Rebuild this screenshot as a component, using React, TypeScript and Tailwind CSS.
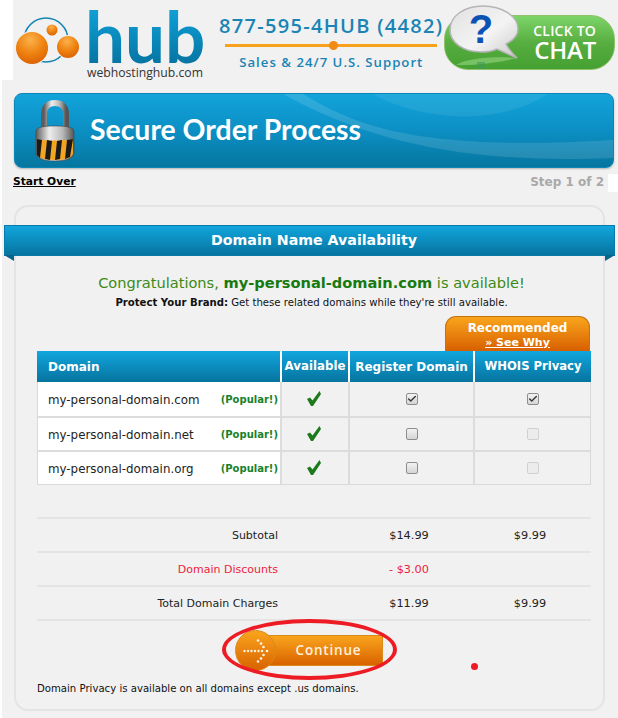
import { Check } from "lucide-react";

const sans = "font-['DejaVu_Sans',Verdana,sans-serif]";
const brand = "font-['Open_Sans',sans-serif]";

const domains = [
  { name: "my-personal-domain.com", picked: true },
  { name: "my-personal-domain.net", picked: false },
  { name: "my-personal-domain.org", picked: false },
];

function Logo() {
  return (
    <div className="flex h-[80px] w-[205px]">
      <span className="h-full w-[11px] shrink-0 bg-white" />
      <svg width="72" height="80" viewBox="13 0 72 80" className="shrink-0">
        <defs>
          <radialGradient id="ball" cx="45%" cy="25%" r="80%">
            <stop offset="0%" stopColor="#fbb24a" />
            <stop offset="55%" stopColor="#ee8110" />
            <stop offset="100%" stopColor="#d95f02" />
          </radialGradient>
        </defs>
        <circle cx="46" cy="40" r="22" fill="none" stroke="#1684b4" strokeWidth="1.6" />
        <circle cx="32" cy="48" r="17" fill="#f1f1f1" />
        <circle cx="68" cy="47" r="12" fill="#f1f1f1" />
        <circle cx="32" cy="48" r="16" fill="url(#ball)" />
        <circle cx="52" cy="30" r="5.5" fill="url(#ball)" />
        <circle cx="68" cy="47" r="11" fill="url(#ball)" />
      </svg>
      <div className="flex flex-col">
        <span className="h-[65px] bg-gradient-to-b from-[#10a8e0] to-[#0674a2] bg-clip-text font-['Lato',sans-serif] text-[71px] font-bold leading-[71px] text-transparent">
          hub
        </span>
        <span className={`${brand} ml-[2px] whitespace-nowrap text-[12.2px] leading-[16px] text-[#333]`}>webhostinghub.com</span>
      </div>
    </div>
  );
}

function ChatButton() {
  return (
    <div className="relative ml-auto mt-[15px] flex h-[55px] w-[171px] flex-col items-end rounded-[24px] border border-[#8fc26a] bg-gradient-to-b from-[#7dd468] via-[#58ae40] to-[#45a032] pr-[18px] pt-[6px] text-white">
      <span className={`${brand} text-[14px] font-semibold leading-[17px] tracking-[0.2px]`}>CLICK TO</span>
      <span className={`${brand} mt-[-1px] text-[24px] font-semibold leading-[24px] tracking-[-0.2px]`}>CHAT</span>
      {/* bubble + its faint reflection on the button */}
      <svg width="72" height="66" viewBox="0 0 72 66" className="absolute left-[3px] top-[-11px]">
        <defs>
          <linearGradient id="bubble" x1="0" y1="0" x2="1" y2="1">
            <stop offset="0%" stopColor="#e0e0e0" />
            <stop offset="55%" stopColor="#f4f4f4" />
            <stop offset="100%" stopColor="#cbcbcb" />
          </linearGradient>
        </defs>
        <path d="M8 60c10-7 40-9 60-7-8 3-42 8-60 7Z" fill="#8bcf78" opacity="0.7" />
        <rect x="29" y="57" width="8" height="7" fill="#3f9a5a" opacity="0.6" />
        <path
          d="M35 1C16 1 2 11 2 25c0 13 14 22 31 22 6 0 12-1 16-3l20 9c-4-4-9-10-11-14 8-4 12-9 12-15C70 11 54 1 35 1Z"
          fill="url(#bubble)"
          stroke="#b5b5b5"
          strokeWidth="1.5"
        />
        <text x="33" y="38" textAnchor="middle" fontFamily="'Liberation Sans',sans-serif" fontWeight="700" fontSize="40" fill="#0b52b4">
          ?
        </text>
      </svg>
    </div>
  );
}

function Padlock() {
  return (
    <svg width="42" height="62" viewBox="0 0 42 62" className="shrink-0">
      <defs>
        <linearGradient id="steel" x1="0" y1="0" x2="1" y2="0">
          <stop offset="0%" stopColor="#5d5d5d" />
          <stop offset="35%" stopColor="#eeeeee" />
          <stop offset="70%" stopColor="#b9b9b9" />
          <stop offset="100%" stopColor="#555" />
        </linearGradient>
      </defs>
      <path d="M10 30V14C10 6 15 3 21 3s11 3 11 11v16" fill="none" stroke="url(#steel)" strokeWidth="6" />
      <path d="M2 31c0-3 5-5 19-5s19 2 19 5v22c0 5-6 8-19 8S2 58 2 53Z" fill="url(#steel)" stroke="#444" strokeWidth="0.6" />
      <path d="M3 39c5 2 31 2 36 0v15c-1 3-7 6-18 6S4 57 3 54Z" fill="#f3a51f" />
      <path d="M3 39l5 1-2 18-3-3ZM13 40l5 1-2 19-5-1ZM23 41l5-1-2 19-5 1ZM33 40l6-1-3 18-5 2Z" fill="#1a1a1a" />
    </svg>
  );
}

function Banner() {
  return (
    <div className="relative ml-[12px] flex h-[75px] w-[600px] items-center overflow-hidden rounded-[8px] border border-[#0c86b6] bg-gradient-to-b from-[#12a4da] via-[#0c8fc4] to-[#06769f] pl-[19px] shadow-[0_1px_2px_rgba(0,0,0,0.25)]">
      <Padlock />
      <h1 className="mb-[2px] ml-[14px] font-['Lato',sans-serif] text-[28.4px] font-bold leading-none text-white">Secure Order Process</h1>
      <svg width="330" height="75" viewBox="0 0 330 75" className="absolute right-0 top-0">
        <path d="M20 0c50 30 110 58 310 46V64C190 70 90 50 0 0Z" fill="#fff" opacity="0.12" />
        <path d="M90 0c30 18 110 40 175 0Z" fill="#fff" opacity="0.07" />
      </svg>
    </div>
  );
}

function Box({ checked, disabled }: { checked?: boolean; disabled?: boolean }) {
  return (
    <span
      className={`relative inline-flex h-[12px] w-[12px] items-center justify-center rounded-[2px] border ${
        disabled
          ? "border-[#d0d0d0] bg-[#ececec]"
          : "border-[#8e8e8e] bg-gradient-to-b from-[#f2f2f2] to-[#d5d5d5]"
      }`}
    >
      {checked && <Check size={10} strokeWidth={3.5} className="text-[#3a3a3a]" />}
    </span>
  );
}

function Tick() {
  return (
    <svg width="14" height="15" viewBox="0 0 14 15" className="ml-[-2px] mt-[-1px]">
      <path d="M0 8 3 6.5 5.5 9.5 12.5 0 14 3 6 15H4Z" fill="#1c7a1c" />
    </svg>
  );
}

function TotalRow({ label, first, second, red }: { label: string; first: string; second: string; red?: boolean }) {
  return (
    <div
      className={`grid h-[34px] grid-cols-[241px_68px_125px_118px] items-center border-t-2 border-[#e4e4e4] pt-[2px] text-[11.3px] ${
        red ? "text-[#ee1c3c]" : "text-[#222]"
      }`}
    >
      <span className="text-right text-[11px]">{label}</span>
      <span />
      <span className="pl-[1px] text-center">{first}</span>
      <span className="text-center">{second}</span>
    </div>
  );
}

export default function App() {
  return (
    <div className={`${sans} h-[718px] w-[618px] overflow-hidden bg-white pl-[2px]`}>
      <div className="h-full bg-[#f1f1f1]">
        {/* top bar */}
        <div className="flex h-[93px] items-start">
          <Logo />
          <div className={`${brand} flex w-[238px] flex-col items-center pl-[12px] pt-[13px] text-[#1a84b4]`}>
            <span className="whitespace-nowrap text-[20px] font-semibold leading-[26px] tracking-[1.3px]">877-595-4HUB (4482)</span>
            <div className="relative mt-[5px] h-[3px] w-[212px] bg-[#f7a11c]">
              <span className="absolute left-[104px] top-[-3px] h-[9px] w-[9px] rounded-full bg-[#f08a12]" />
            </div>
            <span className="mt-[6px] whitespace-nowrap text-[13.2px] font-semibold leading-[18px] tracking-[1px]">Sales &amp; 24/7 U.S. Support</span>
          </div>
          <div className="mr-[3px] flex-1">
            <ChatButton />
          </div>
        </div>

        <Banner />

        <div className="flex h-[37px] items-start pl-[11px] pt-[6px]">
          <a className="mt-[1px] text-[10.7px] font-bold leading-[14px] text-black underline">Start Over</a>
          <span className="ml-auto mr-[4px] text-[12px] font-bold leading-[16px] text-[#a8a8a8]">Step 1 of 2</span>
          <span className="h-[18px] w-[10px] bg-white" />
        </div>

        {/* order card */}
        <div className="ml-[12px] h-[506px] w-[591px] rounded-[14px] border-2 border-[#e4e4e4] pt-[18px]">
          <div className="relative mx-[-12px] flex h-[31px] items-center justify-center border border-[#0a7ba8] bg-gradient-to-b from-[#11a6de] to-[#07749f] pl-[9px]">
            <h2 className="text-[14.2px] font-bold text-white">Domain Name Availability</h2>
            <svg width="10" height="6" viewBox="0 0 10 6" className="absolute bottom-[-6px] left-[-1px]">
              <path d="M0 0h10v6Z" fill="#07648c" />
            </svg>
            <svg width="10" height="6" viewBox="0 0 10 6" className="absolute bottom-[-6px] right-[-1px]">
              <path d="M10 0H0v6Z" fill="#07648c" />
            </svg>
          </div>

          <div className="mt-[17px] pl-[4px] text-center">
            <p className="text-[14.6px] leading-[20px] text-[#3c8a14]">
              Congratulations, <b className="text-[#177a10]">my-personal-domain.com</b> is available!
            </p>
            <p className="mt-[2px] text-[10.15px] leading-[16px] text-[#111]">
              <b>Protect Your Brand:</b> Get these related domains while they're still available.
            </p>
          </div>

          <div className="ml-[21px] w-[554px]">
            <div className="ml-auto mr-[1px] mt-[5px] flex h-[35px] w-[145px] flex-col items-center rounded-t-[11px] border border-b-0 border-[#c4730f] bg-gradient-to-b from-[#f9a51c] to-[#d75f00] pt-[4px] text-white">
              <span className="text-[12px] font-bold leading-[15px]">Recommended</span>
              <a className="text-[11px] font-bold leading-[13px] underline">» See Why</a>
            </div>

            {/* domain table */}
            <div className="grid h-[31px] grid-cols-[243px_68px_125px_118px] items-center bg-gradient-to-b from-[#11a6de] to-[#07749f] text-[12px] font-bold text-white">
              <span className="pl-[11px]">Domain</span>
              <span className="flex h-full items-center justify-center border-l-2 border-white text-[11.8px]">Available</span>
              <span className="flex h-full items-center justify-center border-l-2 border-white">Register Domain</span>
              <span className="flex h-full items-center justify-center border-l-2 border-white text-[11.6px]">WHOIS Privacy</span>
            </div>
            <div className="border-x border-b border-[#d9d9d9]">
              {domains.map((d, i) => (
                <div
                  key={d.name}
                  className={`grid h-[34px] grid-cols-[242px_68px_125px_117px] ${i > 0 ? "border-t-2 border-[#dcdcdc]" : ""}`}
                >
                  <div className="flex items-center justify-between bg-white pl-[10px] pr-[2px]">
                    <span className="mt-[3px] text-[11.85px] text-[#222]">{d.name}</span>
                    <span className="text-[10px] font-bold text-[#17812b]">(Popular!)</span>
                  </div>
                  <div className="flex items-center justify-center border-l-2 border-[#dcdcdc]">
                    <Tick />
                  </div>
                  <div className="flex items-center justify-center border-l-2 border-[#dcdcdc]">
                    <Box checked={d.picked} />
                  </div>
                  <div className="flex items-center justify-center border-l-2 border-[#dcdcdc]">
                    <Box checked={d.picked} disabled={!d.picked} />
                  </div>
                </div>
              ))}
            </div>

            <div className="mt-[32px] border-b-2 border-[#e4e4e4]">
              <TotalRow label="Subtotal" first="$14.99" second="$9.99" />
              <TotalRow label="Domain Discounts" first="- $3.00" second="" red />
              <TotalRow label="Total Domain Charges" first="$11.99" second="$9.99" />
            </div>

            {/* continue */}
            <div className="relative mt-[9px] flex h-[42px] pl-[198px]">
              <div className="z-10 flex h-[41px] w-[41px] shrink-0 items-center justify-center rounded-full border border-[#d98a17] bg-gradient-to-b from-[#f9a41c] to-[#d86200]">
                <svg width="26" height="24" viewBox="0 0 26 24" fill="#fff3e2">
                  <circle cx="1.5" cy="12" r="1.2" />
                  <circle cx="5" cy="12" r="1.2" />
                  <circle cx="8.5" cy="12" r="1.2" />
                  <circle cx="12" cy="12" r="1.2" />
                  <circle cx="15.5" cy="12" r="1.2" />
                  <circle cx="19" cy="12" r="1.2" />
                  <circle cx="24" cy="12" r="1.3" />
                  <circle cx="20.5" cy="8" r="1.3" />
                  <circle cx="18" cy="4.5" r="1.3" />
                  <circle cx="15" cy="1.5" r="1.3" />
                  <circle cx="20.5" cy="16" r="1.3" />
                  <circle cx="18" cy="19.5" r="1.3" />
                  <circle cx="15" cy="22.5" r="1.3" />
                </svg>
              </div>
              <button className={`${brand} ml-[-20px] mt-[5px] h-[31px] w-[127px] border border-[#d98a17] bg-gradient-to-b from-[#f9a41c] to-[#d86200] pl-[18px] text-[13.5px] font-semibold tracking-[0.8px] text-[#fff0dd]`}>
                Continue
              </button>
              <span className="absolute left-[185px] top-[-11px] z-20 h-[61px] w-[175px] rounded-[50%] border-[4px] border-[#ed1c24]" />
              <span className="absolute left-[434px] top-[33px] h-[7px] w-[7px] rounded-full bg-[#ed1c24]" />
            </div>

            <p className="mt-[10px] whitespace-nowrap text-[10.15px] leading-[14px] text-[#111]">
              Domain Privacy is available on all domains except .us domains.
            </p>
          </div>
        </div>
      </div>
    </div>
  );
}
